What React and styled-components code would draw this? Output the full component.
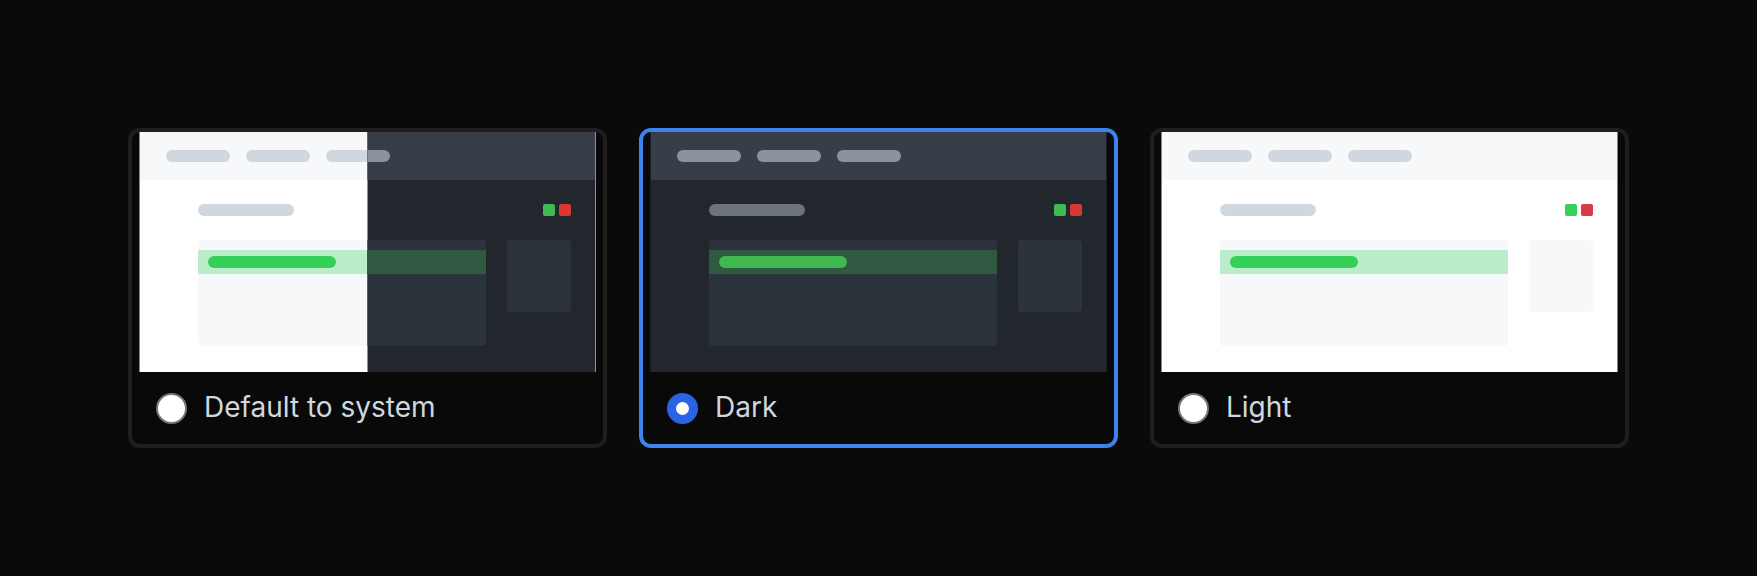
import React, { useState } from "react";
import styled, { createGlobalStyle } from "styled-components";

const GlobalStyle = createGlobalStyle`
  html, body {
    margin: 0;
    padding: 0;
    background: #0a0a0a;
  }
  body {
    font-family: Inter, "Noto Sans", "Liberation Sans", sans-serif;
  }
`;

const palettes = {
  light: {
    header: "#f6f8fa",
    body: "#ffffff",
    headerPill: "#d0d7de",
    titlePill: "#d0d7de",
    box: "#f6f8fa",
    band: "#bcedcb",
    bar: "#34d058",
    green: "#34d058",
    red: "#d73a49",
    edge: "#7d8590",
  },
  dark: {
    header: "#373e47",
    body: "#22272e",
    headerPill: "#8d939c",
    titlePill: "#6e747e",
    box: "#2d333b",
    band: "#2f5941",
    bar: "#3fb950",
    green: "#3fb950",
    red: "#da3633",
    edge: "#1b1f24",
  },
};

const themes = [
  { id: "system", label: "Default to system" },
  { id: "dark", label: "Dark" },
  { id: "light", label: "Light" },
];

const MockUi = ({ p }) => (
  <g>
    <rect x="0" y="0" width="457" height="240" fill={p.body} />
    <rect x="0" y="0" width="457" height="48" fill={p.header} />
    {[27, 107, 187].map((x) => (
      <rect key={x} x={x} y="18" width="64" height="12" rx="6" fill={p.headerPill} />
    ))}
    <rect x="59" y="72" width="96" height="12" rx="6" fill={p.titlePill} />
    <rect x="404" y="72" width="12" height="12" rx="2" fill={p.green} />
    <rect x="420" y="72" width="12" height="12" rx="2" fill={p.red} />
    <rect x="59" y="108" width="288" height="106" rx="4" fill={p.box} />
    <rect x="59" y="118" width="288" height="24" fill={p.band} />
    <rect x="69" y="124" width="128" height="12" rx="6" fill={p.bar} />
    <rect x="368" y="108" width="64" height="72" rx="4" fill={p.box} />
  </g>
);

const Preview = ({ mode }) => {
  const clipId = `half-${mode}`;
  return (
    <PreviewSvg viewBox="0 0 457 240" preserveAspectRatio="none">
      <defs>
        <clipPath id={clipId}>
          <rect x="228.5" y="0" width="229" height="240" />
        </clipPath>
      </defs>
      {mode === "system" ? (
        <>
          <MockUi p={palettes.light} />
          <g clipPath={`url(#${clipId})`}>
            <MockUi p={palettes.dark} />
          </g>
          <rect x="0" y="0" width="1" height="240" fill={palettes.light.edge} />
          <rect x="456" y="0" width="1" height="240" fill="#8b929b" />
        </>
      ) : (
        <>
          <MockUi p={palettes[mode]} />
          <rect x="0" y="0" width="1" height="240" fill={palettes[mode].edge} />
          <rect x="456" y="0" width="1" height="240" fill={palettes[mode].edge} />
        </>
      )}
    </PreviewSvg>
  );
};

export default function App() {
  const [selected, setSelected] = useState("dark");

  return (
    <>
      <GlobalStyle />
      <Page>
        <CardRow>
          {themes.map((t) => (
            <Card
              key={t.id}
              $active={selected === t.id}
              onClick={() => setSelected(t.id)}
            >
              <PreviewFrame>
                <Preview mode={t.id} />
              </PreviewFrame>
              <LabelRow>
                <Radio $checked={selected === t.id} />
                <Label>{t.label}</Label>
              </LabelRow>
            </Card>
          ))}
        </CardRow>
      </Page>
    </>
  );
}

const Page = styled.div`
  width: 100%;
  height: 576px;
  display: flex;
  align-items: center;
  justify-content: center;
  background: #0a0a0a;
`;

const CardRow = styled.div`
  display: flex;
  gap: 32px;
`;

const Card = styled.div`
  box-sizing: border-box;
  width: 479px;
  height: 320px;
  border: 4px solid ${(p) => (p.$active ? "#3d83ef" : "#1f1f1f")};
  border-radius: 12px;
  background: #090909;
  display: flex;
  flex-direction: column;
  cursor: pointer;
`;

const PreviewFrame = styled.div`
  padding: 0 7px;
  height: 240px;
`;

const PreviewSvg = styled.svg`
  display: block;
  width: 457px;
  height: 240px;
`;

const LabelRow = styled.div`
  flex: 1;
  display: flex;
  align-items: center;
  padding-left: 24px;
  gap: 17px;
`;

const Radio = styled.span`
  box-sizing: border-box;
  width: 31px;
  height: 31px;
  border-radius: 50%;
  flex-shrink: 0;
  background: #ffffff;
  border: ${(p) => (p.$checked ? "9px solid #2a64e4" : "2px solid #72777f")};
`;

const Label = styled.span`
  font-size: 28px;
  font-weight: 400;
  color: #d1d7df;
  line-height: 1;
  margin-top: -2px;
`;
